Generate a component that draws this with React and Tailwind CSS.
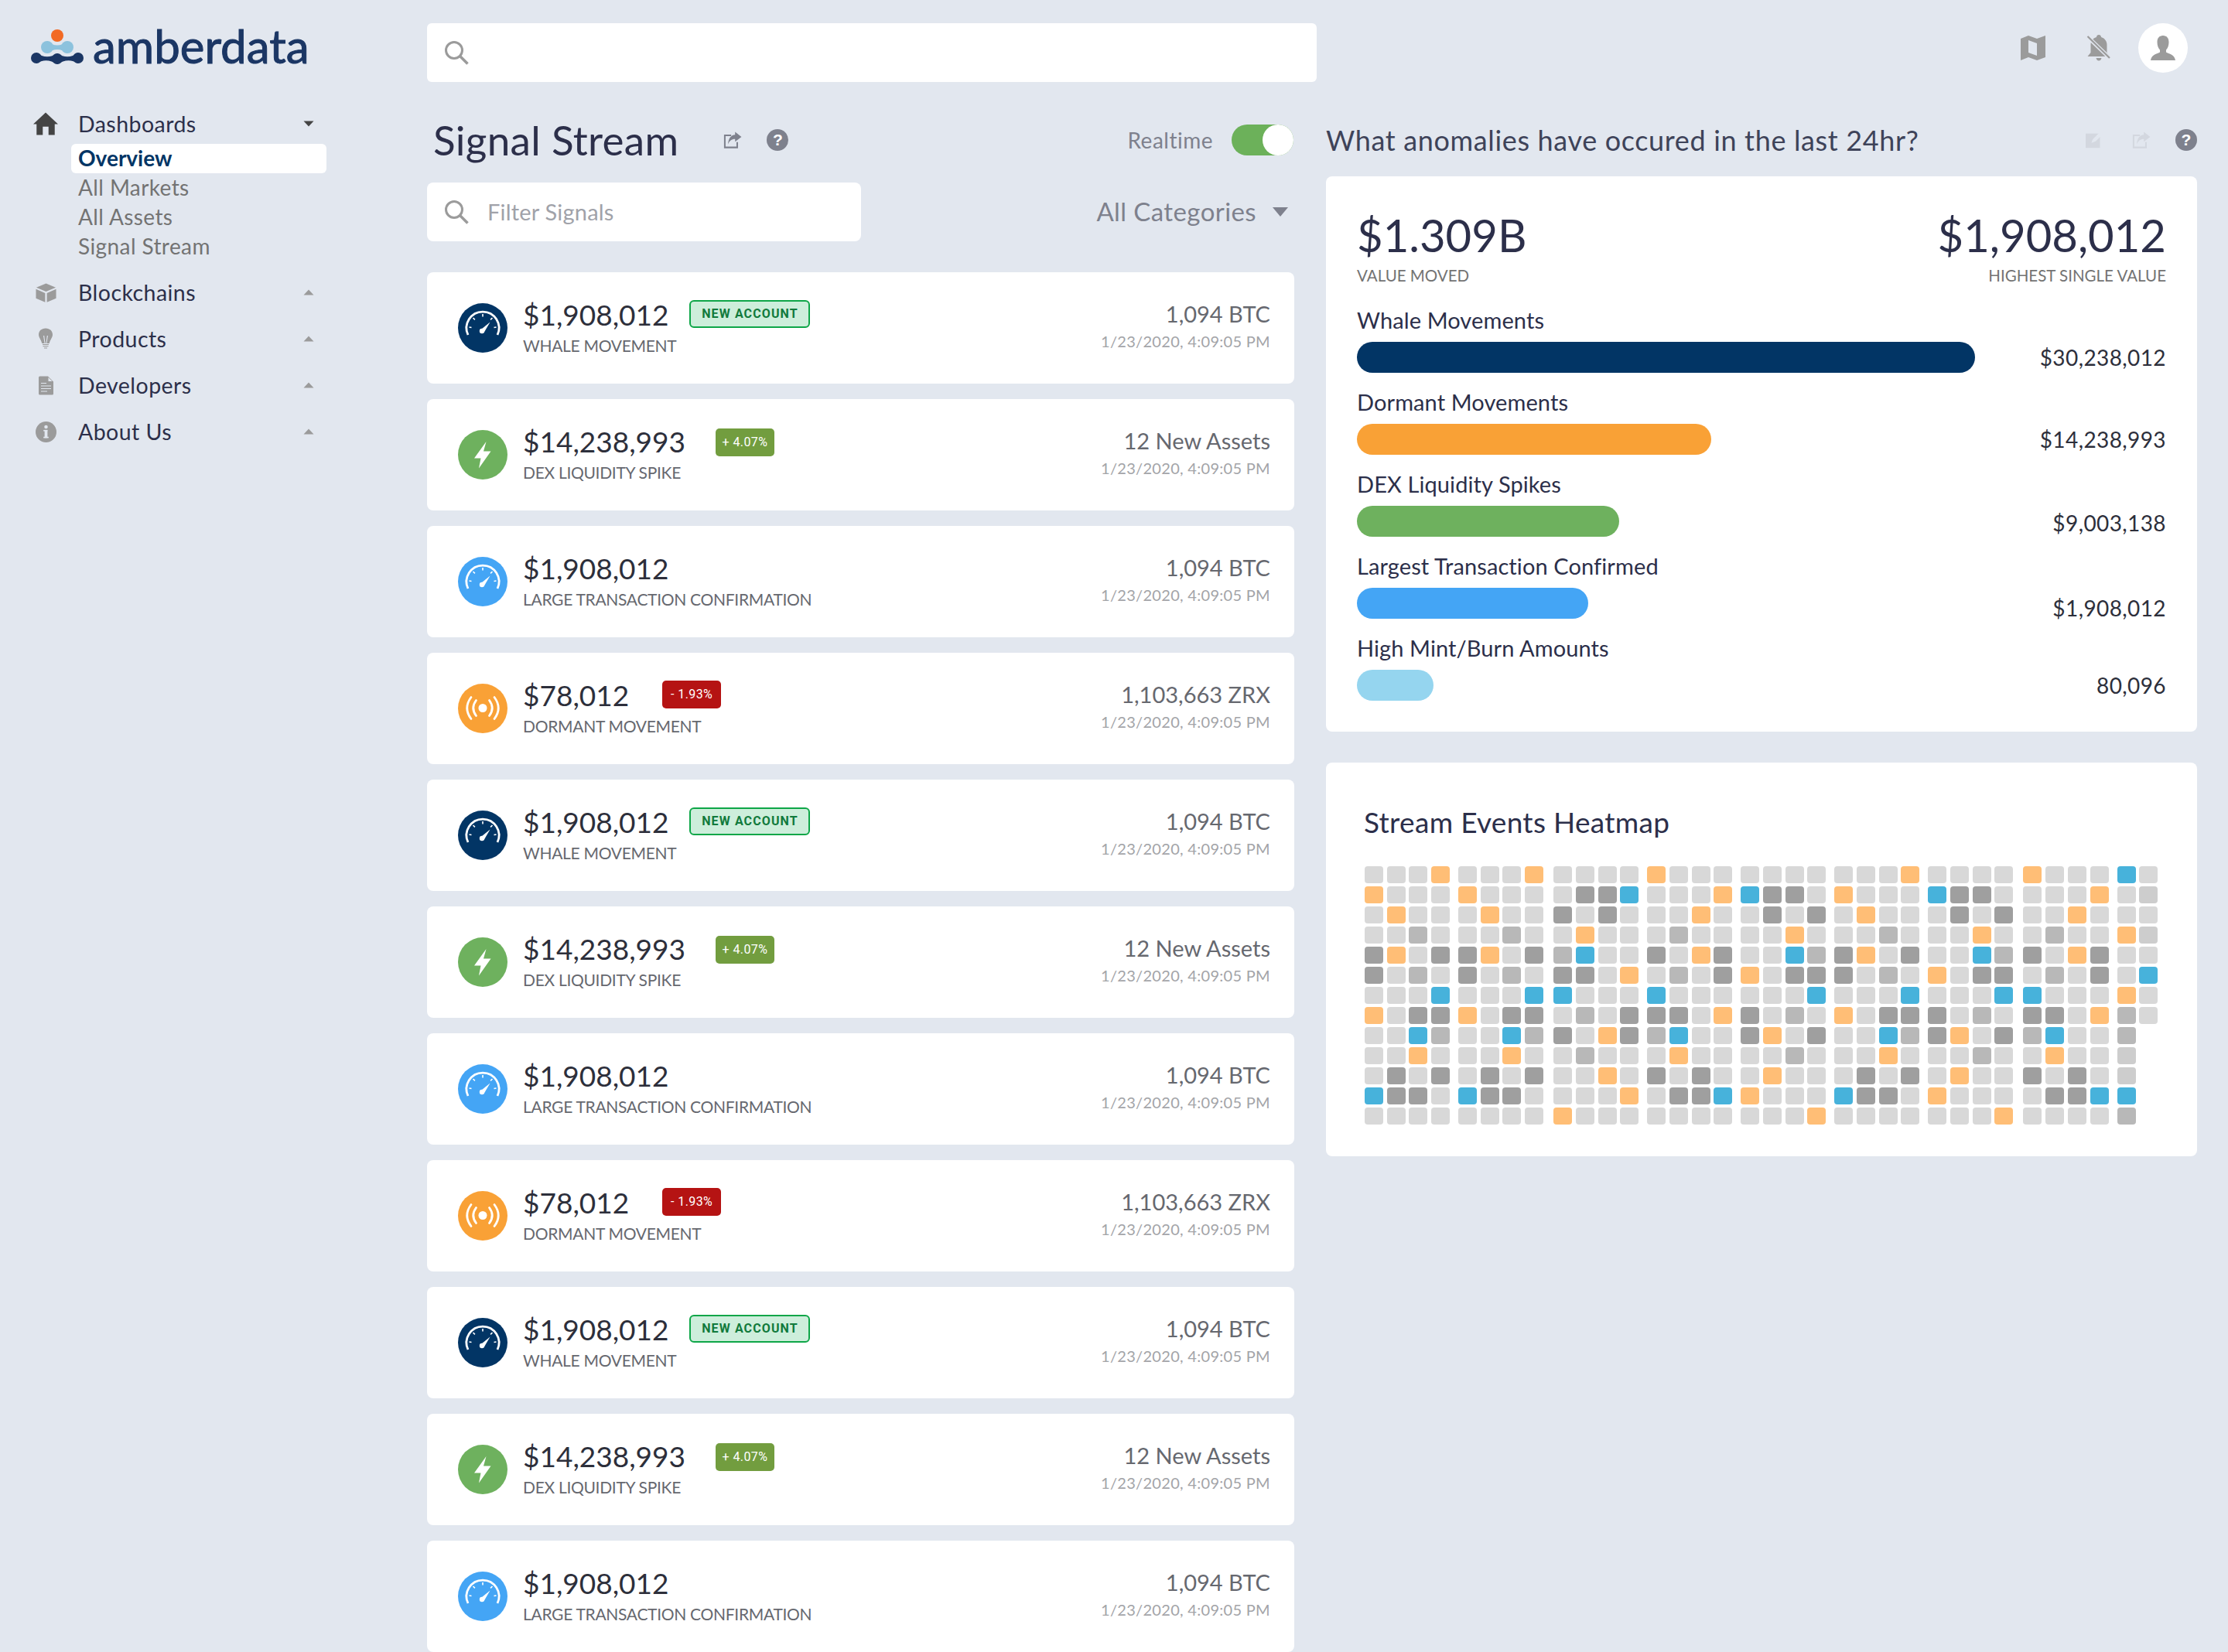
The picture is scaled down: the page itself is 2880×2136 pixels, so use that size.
import React from "react";

const F = { fontFamily: '"Lato", "Open Sans", sans-serif' };
const R = { fontFamily: 'Roboto, "Liberation Sans", sans-serif' };

const GAUGE = (
  <svg viewBox="0 0 64 64" className="w-[64px] h-[64px]" fill="none" stroke="#fff">
    <path d="M13 41 A21 21 0 1 1 51 41" strokeWidth="2.8" />
    <path d="M32 14v3.5M19.5 19l2.4 2.4M44.5 19l-2.4 2.4M14.5 31l3 .5M49.5 31l-3 .5" strokeWidth="1.6" />
    <path d="M29.2 34.5 L41.5 24.5 L33.6 38 Z" fill="#fff" stroke="none" />
    <circle cx="31" cy="36" r="3.2" fill="#fff" stroke="none" />
  </svg>
);
const BOLT = (
  <svg viewBox="0 0 64 64" className="w-[64px] h-[64px]">
    <path d="M36.5 15 L21 36.5 H29.5 L27 49.5 L42.5 27.5 H33 Z" fill="#fff" />
  </svg>
);
const RADIO = (
  <svg viewBox="0 0 64 64" className="w-[64px] h-[64px]" fill="none" stroke="#fff" strokeWidth="2.8" strokeLinecap="round">
    <circle cx="32" cy="31.5" r="5.5" fill="#fff" stroke="none" />
    <path d="M23.5 21.5 Q16 31.5 23.5 41.5M40.5 21.5 Q48 31.5 40.5 41.5" />
    <path d="M17 17.5 Q6.5 31.5 17 45.5M47 17.5 Q57.5 31.5 47 45.5" />
  </svg>
);

const NewBadge = () => (
  <span className="ml-[27px] mt-[1px] flex items-center justify-center w-[156px] h-[36px] rounded-[6px] border-[2px] border-[#0ea648] bg-[#cdeedb] text-[#117a3c] text-[16px] font-bold tracking-[1.1px] whitespace-nowrap" style={R}>
    NEW ACCOUNT
  </span>
);
const PctBadge = ({ text, cls, spacing }) => (
  <span className={`${spacing} flex items-center justify-center w-[76px] h-[36px] rounded-[5px] text-white text-[16px] tracking-[0.4px] whitespace-nowrap ${cls}`} style={R}>
    {text}
  </span>
);

const KINDS = {
  whale: { amount: "$1,908,012", label: "WHALE MOVEMENT", right: "1,094 BTC", color: "bg-[#023565]", icon: GAUGE, badge: <NewBadge /> },
  dex: { amount: "$14,238,993", label: "DEX LIQUIDITY SPIKE", right: "12 New Assets", color: "bg-[#6eb15e]", icon: BOLT, badge: <PctBadge text="+ 4.07%" cls="bg-[#729d3f]" spacing="ml-[39px] mt-[3px]" /> },
  large: { amount: "$1,908,012", label: "LARGE TRANSACTION CONFIRMATION", right: "1,094 BTC", color: "bg-[#44a5f5]", icon: GAUGE, badge: null },
  dormant: { amount: "$78,012", label: "DORMANT MOVEMENT", right: "1,103,663 ZRX", color: "bg-[#f9a136]", icon: RADIO, badge: <PctBadge text="- 1.93%" cls="bg-[#b51313]" spacing="ml-[43px] mt-[1px]" /> },
};

const ROWS = ["whale", "dex", "large", "dormant", "whale", "dex", "large", "dormant", "whale", "dex", "large"];

function SignalRow({ kind }) {
  const k = KINDS[kind];
  return (
    <div className="h-[144px] shrink-0 rounded-[8px] bg-white flex items-center pl-[40px] pr-[31px]">
      <div className={`w-[64px] h-[64px] rounded-full shrink-0 ${k.color}`}>{k.icon}</div>
      <div className="ml-[20px] flex-1 pb-[3px]">
        <div className="flex items-start h-[40px]">
          <span className="text-[37px] leading-[40px] text-[#2d2f3b]">{k.amount}</span>
          {k.badge}
        </div>
        <div className="mt-[8px] text-[21px] leading-[24px] text-[#66686f] tracking-[-0.3px]">{k.label}</div>
      </div>
      <div className="text-right pb-[6px]">
        <div className="text-[29px] leading-[36px] text-[#66686f]">{k.right}</div>
        <div className="mt-[4px] text-[20px] leading-[26px] text-[#a3a4a8] tracking-[0.3px]">1/23/2020, 4:09:05 PM</div>
      </div>
    </div>
  );
}

const Caret = ({ up, color }) => (
  <svg viewBox="0 0 14 8" className="w-[14px] h-[8px]" style={{ transform: up ? "rotate(180deg)" : undefined }}>
    <path d="M0.5 0.5H13.5L7 7.5Z" fill={color} />
  </svg>
);

const SearchIcon = ({ className }) => (
  <svg viewBox="0 0 32 32" className={className} fill="none" stroke="#9b9b9b" strokeWidth="3">
    <circle cx="13" cy="13" r="10.5" />
    <path d="M20.5 20.5 L30.5 30.5" strokeWidth="3.6" />
  </svg>
);

const ShareIcon = ({ color, className }) => (
  <svg viewBox="0 0 26 24" className={className} fill="none">
    <path d="M11 5.5 H2 V22.5 H19.5 V15" stroke={color} strokeWidth="2.2" />
    <path d="M16.5 0.5 L25.5 7.5 L16.5 14.5 V10.5 C11.5 10.5 8.5 13 6.5 18 C7 10 10.5 5 16.5 4.5 Z" fill={color} />
  </svg>
);

const HelpIcon = ({ className }) => (
  <span className={`rounded-full bg-[#7e818d] text-white font-bold flex items-center justify-center ${className}`} style={{ fontFamily: '"Liberation Sans", sans-serif' }}>?</span>
);

const NavIcons = {
  cube: (
    <svg viewBox="0 0 28 26" className="w-[27px] h-[27px]">
      <path d="M14 0.5 L27 6 L14 11.5 L1 6 Z" fill="#9b9b9b" />
      <path d="M0.5 8 L12.8 13.5 V25.8 L0.5 20.5 Z M27.5 8 L15.2 13.5 V25.8 L27.5 20.5 Z" fill="#9b9b9b" />
    </svg>
  ),
  bulb: (
    <svg viewBox="0 0 18 27" className="w-[18px] h-[28px]">
      <path d="M9 0 C3.5 0 0 3.6 0 8.2 C0 12 3 14.2 4.3 19.5 H7.6 L6 9.5 H7.2 L8.5 19.5 H9.5 L10.8 9.5 H12 L10.4 19.5 H13.7 C15 14.2 18 12 18 8.2 C18 3.6 14.5 0 9 0 Z" fill="#9b9b9b" />
      <path d="M5 21 H13 M5.5 23.2 H12.5 M7 25.5 H11" stroke="#9b9b9b" strokeWidth="1" />
    </svg>
  ),
  doc: (
    <svg viewBox="0 0 19 24" className="w-[19px] h-[25px]">
      <path d="M1.5 0 H12 L19 7 V22.5 A1.5 1.5 0 0 1 17.5 24 H1.5 A1.5 1.5 0 0 1 0 22.5 V1.5 A1.5 1.5 0 0 1 1.5 0 Z" fill="#9b9b9b" />
      <path d="M3 9 H10 M3 12.5 H16 M3 16 H16 M3 19.5 H11" stroke="#e2e7ef" strokeWidth="1.2" />
      <path d="M12.5 1.5 L17.5 6.5 H12.5 Z" fill="#e2e7ef" />
    </svg>
  ),
  info: (
    <svg viewBox="0 0 26 26" className="w-[27px] h-[27px]">
      <circle cx="13" cy="13" r="13" fill="#9b9b9b" />
      <rect x="11.2" y="10.5" width="3.6" height="10" fill="#e2e7ef" />
      <rect x="9.8" y="10.5" width="5" height="1.6" fill="#e2e7ef" />
      <rect x="9.8" y="19" width="6.4" height="1.6" fill="#e2e7ef" />
      <circle cx="13" cy="6.8" r="2.2" fill="#e2e7ef" />
    </svg>
  ),
};

function NavItem({ icon, label, mt }) {
  return (
    <div className={`flex items-center h-[32px] ${mt}`}>
      <div className="w-[32px] ml-[43px] flex justify-center">{icon}</div>
      <span className="ml-[26px] flex-1 text-[28.5px] leading-[32px] text-[#2c2f4a] tracking-[0.45px]">{label}</span>
      <div className="mr-[146px]"><Caret up color="#9b9b9b" /></div>
    </div>
  );
}

function Logo() {
  return (
    <svg viewBox="0 0 68 46" className="w-[68px] h-[46px]">
      <circle cx="34" cy="8" r="8" fill="#f26a24" />
      <circle cx="21" cy="23" r="8" fill="#8cc2dd" />
      <circle cx="47" cy="23" r="8" fill="#8cc2dd" />
      <path d="M21 15 Q34 26 47 15 V31 Q34 21 21 31 Z" fill="#8cc2dd" />
      <circle cx="7" cy="37" r="7" fill="#1b3664" />
      <circle cx="34" cy="38" r="7" fill="#1b3664" />
      <circle cx="61" cy="37" r="7" fill="#1b3664" />
      <path d="M7 30 Q20 40 34 31 V45 Q20 36 7 44 Z" fill="#1b3664" />
      <path d="M34 31 Q48 40 61 30 V44 Q48 36 34 45 Z" fill="#1b3664" />
    </svg>
  );
}

function Sidebar() {
  return (
    <aside className="w-[552px] shrink-0">
      <div className="flex items-center pl-[40px] pt-[30px] h-[92px]">
        <Logo />
        <span className="ml-[12px] -mt-[4px] text-[60px] leading-[60px] text-[#1b3664] [-webkit-text-stroke:1px_#1b3664]">amberdata</span>
      </div>
      <div className="mt-[52px]">
        <div className="flex items-center h-[32px]">
          <div className="w-[32px] ml-[43px] flex justify-center">
            <svg viewBox="0 0 30 27" className="w-[32px] h-[30px]">
              <path d="M15 0 L30 14 H26 V27 H18.5 V17 H11.5 V27 H4 V14 H0 Z" fill="#444" />
            </svg>
          </div>
          <span className="ml-[26px] flex-1 text-[28.5px] leading-[32px] text-[#2c2f4a] tracking-[0.45px]">Dashboards</span>
          <div className="mr-[146px]"><Caret color="#444" /></div>
        </div>
        <div className="ml-[92px] mt-[10px] w-[330px]">
          <div className="h-[38px] rounded-[6px] bg-white pl-[9px] text-[28px] leading-[37px] text-[#023565] font-bold">Overview</div>
          <div className="pl-[9px] text-[28px] leading-[38px] text-[#737373] tracking-[0.4px] flex flex-col -mt-[1px]">
            <div>All Markets</div>
            <div>All Assets</div>
            <div>Signal Stream</div>
          </div>
        </div>
        <NavItem mt="mt-[25px]" icon={NavIcons.cube} label="Blockchains" />
        <NavItem mt="mt-[28px]" icon={NavIcons.bulb} label="Products" />
        <NavItem mt="mt-[28px]" icon={NavIcons.doc} label="Developers" />
        <NavItem mt="mt-[28px]" icon={NavIcons.info} label="About Us" />
      </div>
    </aside>
  );
}

function TopRight() {
  return (
    <div className="flex items-center">
      <svg viewBox="0 0 32 32" className="w-[32px] h-[32px]">
        <path d="M0 4 L10 0 L21 4 L32 0 V28 L21 32 L10 28 L0 32 Z" fill="#9b9b9b" />
        <path d="M10 6 L21 10 V26 L10 22 Z" fill="#e2e7ef" />
      </svg>
      <svg viewBox="0 0 32 36" className="ml-[53px] w-[32px] h-[36px]">
        <path d="M16 1 C18 1 19 2.5 19 4 C24 5.5 26.5 9.5 26.5 14 V24 L30.5 29 H1.5 L5.5 24 V14 C5.5 9.5 8 5.5 13 4 C13 2.5 14 1 16 1 Z" fill="#9b9b9b" />
        <path d="M12.5 31 H19.5 C19 33.5 17.5 34.5 16 34.5 C14.5 34.5 13 33.5 12.5 31 Z" fill="#9b9b9b" />
        <path d="M1 3 L31 32" stroke="#e2e7ef" strokeWidth="5" />
        <path d="M1.5 3 L30 31" stroke="#9b9b9b" strokeWidth="2.2" />
      </svg>
      <div className="ml-[35px] w-[64px] h-[64px] rounded-full bg-white flex items-center justify-center">
        <svg viewBox="0 0 32 32" className="w-[32px] h-[32px]">
          <path d="M16 0 C21 0 23.5 3.5 23.5 8.5 C23.5 13 22 16.5 20 18.5 V21.5 C25 24 31 25 32 32 H0 C1 25 7 24 12 21.5 V18.5 C10 16.5 8.5 13 8.5 8.5 C8.5 3.5 11 0 16 0 Z" fill="#9b9b9b" />
        </svg>
      </div>
    </div>
  );
}

const BARS = [
  { label: "Whale Movements", value: "$30,238,012", w: "w-[799px]", color: "bg-[#023565]", valueCls: "" },
  { label: "Dormant Movements", value: "$14,238,993", w: "w-[458px]", color: "bg-[#f9a136]", valueCls: "" },
  { label: "DEX Liquidity Spikes", value: "$9,003,138", w: "w-[339px]", color: "bg-[#6eb15e]", valueCls: "translate-y-[2px]" },
  { label: "Largest Transaction Confirmed", value: "$1,908,012", w: "w-[299px]", color: "bg-[#44a5f5]", valueCls: "translate-y-[6px]" },
  { label: "High Mint/Burn Amounts", value: "80,096", w: "w-[99px]", color: "bg-[#95d5ef]", valueCls: "" },
];

const A = ["lllo","olll","loll","llml","golg","glml","lllb","olgg","llbm","llol","lglg","bggl","llll"];
const B = ["llll","lggb","glgl","loll","mbll","gglo","blll","lmlg","glog","lmll","llol","lllo","olll"];
const C = ["olll","lllo","llol","lmll","glog","lmlg","blll","gglo","mbll","loll","glgl","lggb","llll"];
const D = ["llll","bggl","lglg","llol","llbm","olgg","lllb","glml","golg","llml","loll","olll","lllo"];
const HEAT = [A, A, B, C, D, A, D, C, ["bl","lc","ll","oc","ll","lb","ol","ml","m","c","c","b","m"]];
const HEAT_COL = { l: "bg-[#d8d8d8]", g: "bg-[#9f9f9f]", m: "bg-[#b8b8b8]", o: "bg-[#ffbe76]", b: "bg-[#47b2db]", c: "bg-[#cdcdcd]" };

function Heatmap() {
  return (
    <div className="mt-[35px] ml-[1px] flex gap-[11px]">
      {HEAT.map((group, g) => (
        <div key={g} className={`flex flex-col gap-[4px] ${g === 2 || g === 7 ? "ml-[2px]" : ""}`}>
          {group.map((row, r) => (
            <div key={r} className="flex gap-[4.7px]">
              {row.split("").map((c, i) => (
                <div key={i} className={`w-[24px] h-[22px] rounded-[4px] ${HEAT_COL[c]}`} />
              ))}
            </div>
          ))}
        </div>
      ))}
    </div>
  );
}

export default function App() {
  return (
    <div className="w-[2880px] h-[2136px] overflow-hidden bg-[#e2e7ef] flex" style={F}>
      <Sidebar />
      <main className="flex-1 flex flex-col">
        <div className="flex items-start pt-[30px] h-[105px]">
          <div className="w-[1150px] h-[76px] rounded-[6px] bg-white flex items-center pl-[22px]">
            <SearchIcon className="w-[32px] h-[32px]" />
          </div>
          <div className="flex-1" />
          <TopRight />
          <div className="w-[52px]" />
        </div>
        <div className="flex gap-[41px]">
          <section className="w-[1121px] shrink-0">
            <div className="flex items-center h-[70px] pl-[8px] mt-[41px]">
              <span className="text-[53px] leading-[60px] text-[#2c2f4a] tracking-[0.3px]">Signal Stream</span>
              <ShareIcon color="#7e818d" className="ml-[58px] w-[24px] h-[22px]" />
              <HelpIcon className="ml-[32px] w-[28px] h-[28px] text-[21px]" />
              <div className="flex-1" />
              <span className="text-[28px] text-[#7e818d] tracking-[0.5px]">Realtime</span>
              <div className="ml-[24px] mr-[1px] w-[80px] h-[40px] rounded-full bg-[#6cb15a] flex justify-end">
                <div className="w-[40px] h-[40px] rounded-full bg-white" />
              </div>
            </div>
            <div className="flex items-center mt-[20px]">
              <div className="w-[561px] h-[76px] rounded-[8px] bg-white flex items-center pl-[22px]">
                <SearchIcon className="w-[32px] h-[32px]" />
                <span className="ml-[24px] text-[29px] text-[#a0a2a9] tracking-[0.2px]">Filter Signals</span>
              </div>
              <div className="flex-1" />
              <span className="text-[33px] text-[#7e818d] tracking-[0.4px]">All Categories</span>
              <div className="ml-[21px] mr-[8px] w-[20px] h-[12px]">
                <svg viewBox="0 0 20 12" className="w-[20px] h-[12px]"><path d="M0 0H20L10 12Z" fill="#7e818d" /></svg>
              </div>
            </div>
            <div className="mt-[40px] flex flex-col gap-[20px]">
              {ROWS.map((k, i) => <SignalRow key={i} kind={k} />)}
            </div>
          </section>
          <section className="w-[1126px] shrink-0">
            <div className="flex items-center h-[70px] mt-[41px]">
              <span className="text-[36px] text-[#3e4359] tracking-[0.65px]">What anomalies have occured in the last 24hr?</span>
              <div className="flex-1" />
              <svg viewBox="0 0 26 24" className="w-[24px] h-[24px]">
                <rect x="0" y="3" width="20" height="20" fill="#d3d7df" />
                <path d="M8 16 L10 11 L20 1 L24 4 L14 14 Z" fill="#e2e7ef" />
              </svg>
              <ShareIcon color="#d3d7df" className="ml-[36px] w-[24px] h-[22px]" />
              <HelpIcon className="ml-[32px] w-[28px] h-[28px] text-[21px]" />
            </div>
            <div className="mt-[12px] h-[718px] rounded-[8px] bg-white pl-[40px] pr-[40px] pt-[46px]">
              <div className="flex justify-between">
                <div>
                  <div className="text-[58px] leading-[60px] text-[#2c2f4a]">$1.309B</div>
                  <div className="mt-[10px] text-[20.5px] leading-[24px] text-[#737373]">VALUE MOVED</div>
                </div>
                <div className="text-right">
                  <div className="text-[58px] leading-[60px] text-[#2c2f4a]">$1,908,012</div>
                  <div className="mt-[10px] text-[20.5px] leading-[24px] text-[#737373]">HIGHEST SINGLE VALUE</div>
                </div>
              </div>
              <div className="mt-[30px] flex flex-col gap-[22px]">
                {BARS.map((b) => (
                  <div key={b.label}>
                    <div className="text-[29px] leading-[32px] text-[#2c2f4a] tracking-[0.1px]">{b.label}</div>
                    <div className="flex items-center justify-between mt-[12px]">
                      <div className={`h-[40px] rounded-full ${b.w} ${b.color}`} />
                      <span className={`text-[28px] leading-[40px] text-[#2d2f3b] tracking-[0.4px] ${b.valueCls}`}>{b.value}</span>
                    </div>
                  </div>
                ))}
              </div>
            </div>
            <div className="mt-[40px] h-[509px] rounded-[8px] bg-white pl-[49px] pt-[55px]">
              <div className="text-[37px] leading-[44px] text-[#2c2f4a] tracking-[0.3px]">Stream Events Heatmap</div>
              <Heatmap />
            </div>
          </section>
        </div>
      </main>
    </div>
  );
}
